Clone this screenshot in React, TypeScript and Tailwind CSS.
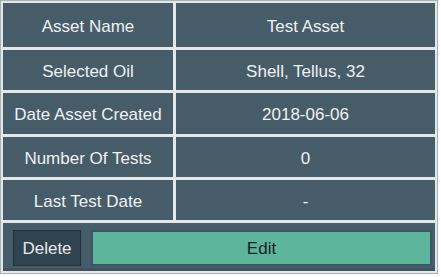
import React from 'react';

const rows: { label: string; value: string; h: string }[] = [
  { label: 'Asset Name', value: 'Test Asset', h: 'h-[44px]' },
  { label: 'Selected Oil', value: 'Shell, Tellus, 32', h: 'h-[40px]' },
  { label: 'Date Asset Created', value: '2018-06-06', h: 'h-[41px]' },
  { label: 'Number Of Tests', value: '0', h: 'h-[40px]' },
  { label: 'Last Test Date', value: '-', h: 'h-[40px]' },
];

export default function App() {
  return (
    <div className="w-[441px] h-[277px] bg-white" style={{ fontFamily: '"Liberation Sans", Arial, sans-serif' }}>
      <div className="w-[438px] h-[274px] border border-[#a9b1b5] bg-[#e3e8ea] p-[2px]">
        <div className="grid grid-cols-[170px_1fr] gap-[3px]">
          {rows.map((r) => (
            <React.Fragment key={r.label}>
              <div className={`${r.h} bg-[#475c69] text-[#eef1f2] text-[17px] pt-[3px] flex items-center justify-center`}>
                {r.label}
              </div>
              <div className={`${r.h} bg-[#475c69] text-[#eef1f2] text-[17px] pt-[3px] flex items-center justify-center`}>
                {r.value}
              </div>
            </React.Fragment>
          ))}
        </div>
        {/* Action bar */}
        <div className="mt-[3px] h-[48px] bg-[#475c69] flex items-start pt-[7px] pl-[10px] pr-[3px] gap-[10px] border-b-[3px] border-[#3f525e]">
          <button className="w-[68px] h-[36px] bg-[#2f4350] border border-[#223039] text-[#e6eaec] text-[17px] pt-[2px] flex items-center justify-center">
            Delete
          </button>
          <button className="flex-1 h-[36px] bg-[#5db59c] border-2 border-[#3c5560] text-[#152424] text-[17px] pt-[2px] flex items-center justify-center">
            Edit
          </button>
        </div>
      </div>
    </div>
  );
}
